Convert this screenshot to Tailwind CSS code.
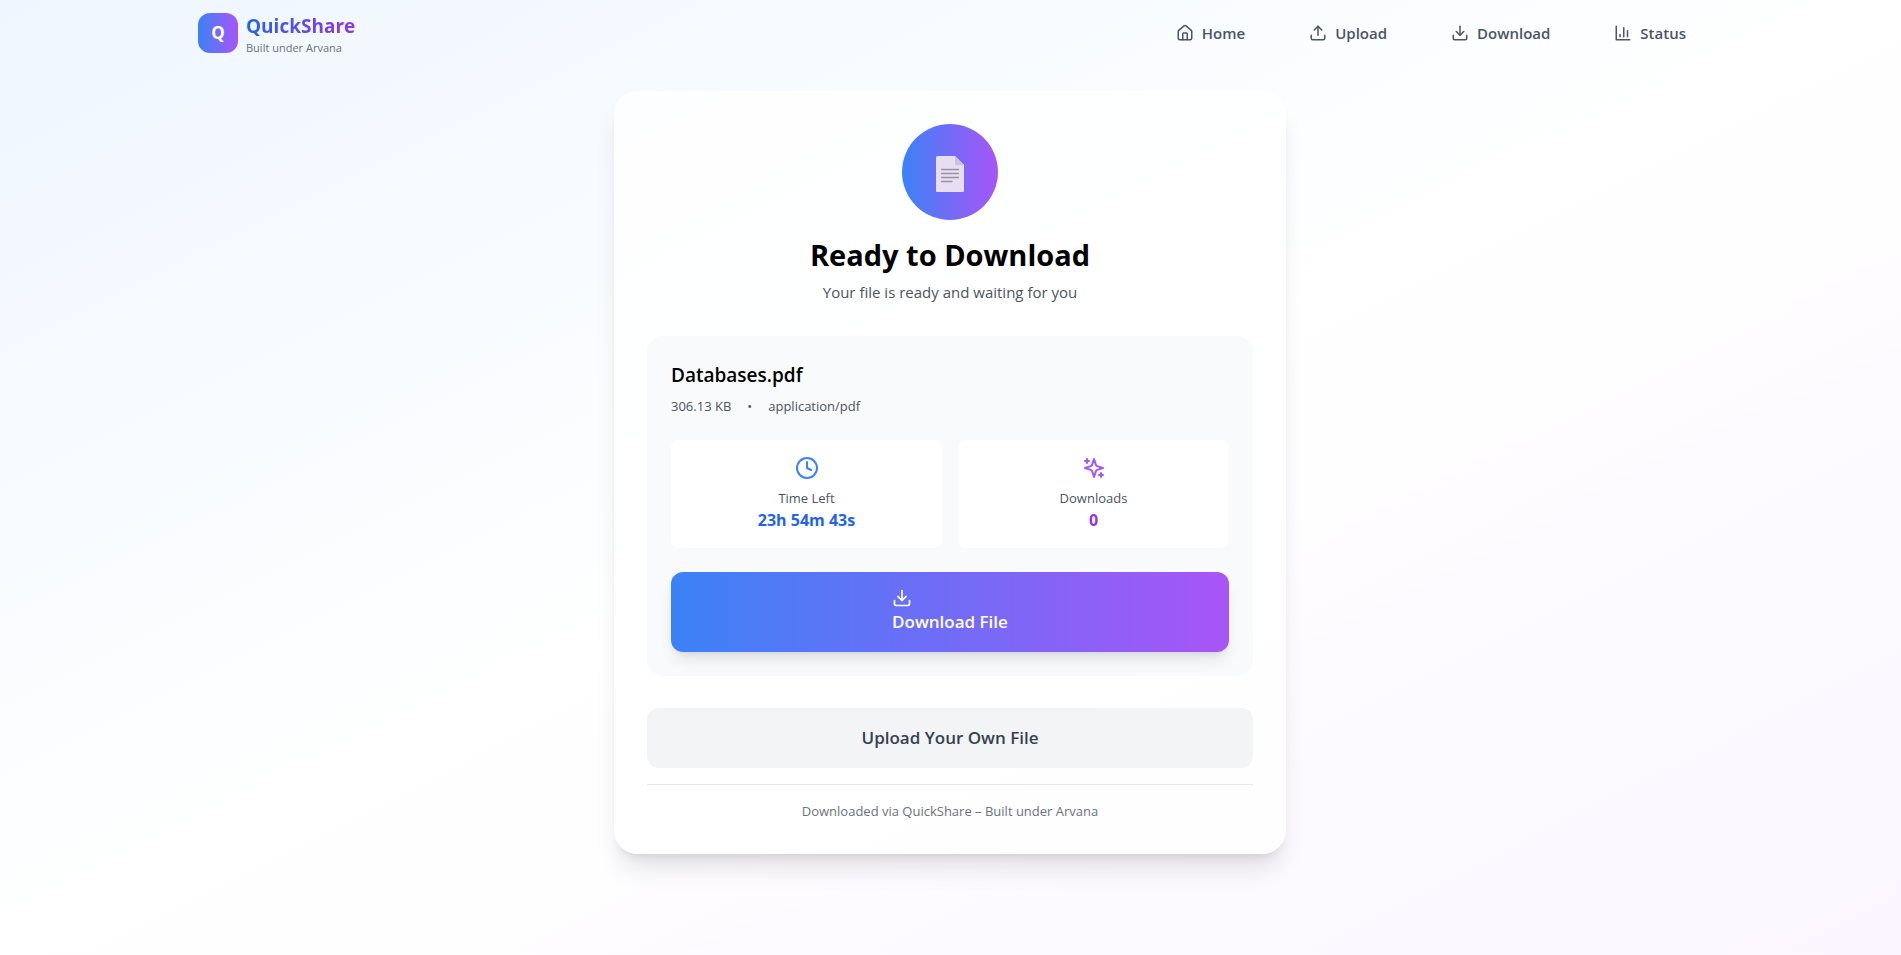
<!DOCTYPE html>
<html lang="en">
<head>
<meta charset="utf-8">
<meta name="viewport" content="width=device-width, initial-scale=1">
<title>QuickShare</title>
<script src="https://cdn.jsdelivr.net/npm/@tailwindcss/browser@4"></script>
</head>
<body class="min-h-screen bg-linear-to-br/srgb from-[#eff6ff] via-white to-[#faf5ff] pr-px font-['Open_Sans','Noto_Sans',sans-serif] text-black">
<header class="mx-auto flex h-[66px] max-w-[1536px] items-center justify-between px-4">
  <a href="#" class="flex items-center gap-2">
    <span class="flex size-10 items-center justify-center rounded-xl bg-linear-to-r/srgb from-[#3b82f6] to-[#a855f7] text-[17px] font-bold text-white">Q</span>
    <span class="flex flex-col items-start pt-0.5">
      <span class="bg-linear-to-r/srgb from-[#2563eb] to-[#9333ea] bg-clip-text text-[19px]/[28px] font-bold text-transparent">QuickShare</span>
      <span class="text-[11px]/[16px] text-[#6b7280]">Built under Arvana</span>
    </span>
  </a>
  <nav class="flex items-center gap-8 text-[15px]/[24px] font-semibold text-[#4b5563]">
    <a href="#" class="flex items-center gap-2 px-4 py-2">
      <svg class="size-[18px]" viewBox="0 0 24 24" fill="none" stroke="currentColor" stroke-width="2" stroke-linecap="round" stroke-linejoin="round"><path d="M15 21v-8a1 1 0 0 0-1-1h-4a1 1 0 0 0-1 1v8"/><path d="M3 10a2 2 0 0 1 .709-1.528l7-5.999a2 2 0 0 1 2.582 0l7 5.999A2 2 0 0 1 21 10v9a2 2 0 0 1-2 2H5a2 2 0 0 1-2-2z"/></svg>
      Home
    </a>
    <a href="#" class="flex items-center gap-2 px-4 py-2">
      <svg class="size-[18px]" viewBox="0 0 24 24" fill="none" stroke="currentColor" stroke-width="2" stroke-linecap="round" stroke-linejoin="round"><path d="M21 15v4a2 2 0 0 1-2 2H5a2 2 0 0 1-2-2v-4"/><path d="m17 8-5-5-5 5"/><path d="M12 3v12"/></svg>
      Upload
    </a>
    <a href="#" class="flex items-center gap-2 px-4 py-2">
      <svg class="size-[18px]" viewBox="0 0 24 24" fill="none" stroke="currentColor" stroke-width="2" stroke-linecap="round" stroke-linejoin="round"><path d="M21 15v4a2 2 0 0 1-2 2H5a2 2 0 0 1-2-2v-4"/><path d="m7 10 5 5 5-5"/><path d="M12 15V3"/></svg>
      Download
    </a>
    <a href="#" class="flex items-center gap-2 px-4 py-2">
      <svg class="size-[18px]" viewBox="0 0 24 24" fill="none" stroke="currentColor" stroke-width="2" stroke-linecap="round" stroke-linejoin="round"><path d="M3 3v18h18"/><path d="M18 17V9"/><path d="M13 17V5"/><path d="M8 17v-3"/></svg>
      Status
    </a>
  </nav>
</header>
<main class="mx-auto max-w-2xl pt-[25px] pb-12">
  <section class="rounded-3xl border border-white/20 bg-white/80 p-8 text-center shadow-[0_20px_25px_-5px_rgb(0_0_0/0.1),0_8px_10px_-6px_rgb(0_0_0/0.1)]">
    <div class="mx-auto mb-4 flex size-24 items-center justify-center rounded-full bg-linear-to-r/srgb from-[#3b82f6] to-[#a855f7]">
      <svg class="mt-1 h-9 w-7" viewBox="0 0 28 36" aria-hidden="true">
        <path d="M1.500 0H19L28 9V34.500Q28 36 26.500 36H1.500Q0 36 0 34.500V1.500Q0 0 1.500 0Z" fill="#e7dff1"/>
        <path d="M19 0L28 9H19Z" fill="#cbc5d2"/>
        <path d="M19 9H28" stroke="#d5cce0" stroke-width="1"/>
        <path d="M5.500 13.500H22.500M5.500 17.500H22.500M5.500 21.500H22.500M5.500 25.500H16" stroke="#9a91a6" stroke-width="1.300" stroke-linecap="round"/>
      </svg>
    </div>
    <h1 class="mb-1.5 text-[29px]/[38px] font-bold">Ready to Download</h1>
    <p class="mb-8 text-[15px]/[24px] text-[#4b5563]">Your file is ready and waiting for you</p>
    <div class="mb-8 rounded-2xl bg-[#f9fafb] p-6">
      <h2 class="mb-1.5 text-left text-[19px]/[30px] font-semibold">Databases.pdf</h2>
      <div class="mb-6 flex gap-4 text-[13px]/[20px] text-[#4b5563]"><span>306.13 KB</span><span>•</span><span>application/pdf</span></div>
      <div class="mb-6 grid grid-cols-2 gap-4">
        <div class="rounded-lg bg-white p-4">
          <svg class="mx-auto mb-2 size-6 text-[#3b82f6]" viewBox="0 0 24 24" fill="none" stroke="currentColor" stroke-width="2" stroke-linecap="round" stroke-linejoin="round"><circle cx="12" cy="12" r="10"/><path d="M12 6v6l4 2"/></svg>
          <p class="text-[13px]/[20px] text-[#4b5563]">Time Left</p>
          <p class="text-[16px]/[24px] font-bold text-[#2563eb]">23h 54m 43s</p>
        </div>
        <div class="rounded-lg bg-white p-4">
          <svg class="mx-auto mb-2 size-6 text-[#a855f7]" viewBox="0 0 24 24" fill="none" stroke="currentColor" stroke-width="2" stroke-linecap="round" stroke-linejoin="round"><path d="m12 3-1.912 5.813a2 2 0 0 1-1.275 1.275L3 12l5.813 1.912a2 2 0 0 1 1.275 1.275L12 21l1.912-5.813a2 2 0 0 1 1.275-1.275L21 12l-5.813-1.912a2 2 0 0 1-1.275-1.275L12 3Z"/><path d="M5 3v4"/><path d="M19 17v4"/><path d="M3 5h4"/><path d="M17 19h4"/></svg>
          <p class="text-[13px]/[20px] text-[#4b5563]">Downloads</p>
          <p class="text-[16px]/[24px] font-bold text-[#9333ea]">0</p>
        </div>
      </div>
      <button type="button" class="flex w-full cursor-pointer justify-center rounded-xl bg-linear-to-r/srgb from-[#3b82f6] to-[#a855f7] p-4 text-[17px]/[28px] font-semibold text-white shadow-[0_10px_15px_-3px_rgb(0_0_0/0.1),0_4px_6px_-4px_rgb(0_0_0/0.1)]">
        <span class="text-left">
          <svg class="size-5" viewBox="0 0 24 24" fill="none" stroke="currentColor" stroke-width="2" stroke-linecap="round" stroke-linejoin="round"><path d="M21 15v4a2 2 0 0 1-2 2H5a2 2 0 0 1-2-2v-4"/><path d="m7 10 5 5 5-5"/><path d="M12 15V3"/></svg>
          Download File
        </span>
      </button>
    </div>
    <button type="button" class="mb-4 block w-full cursor-pointer rounded-xl bg-[#f3f4f6] p-4 text-[17px]/[28px] font-semibold text-[#374151]">Upload Your Own File</button>
    <p class="border-t border-[#e5e7eb] pt-4 text-[13px]/[20px] text-[#6b7280]">Downloaded via QuickShare – Built under Arvana</p>
  </section>
</main>
</body>
</html>
